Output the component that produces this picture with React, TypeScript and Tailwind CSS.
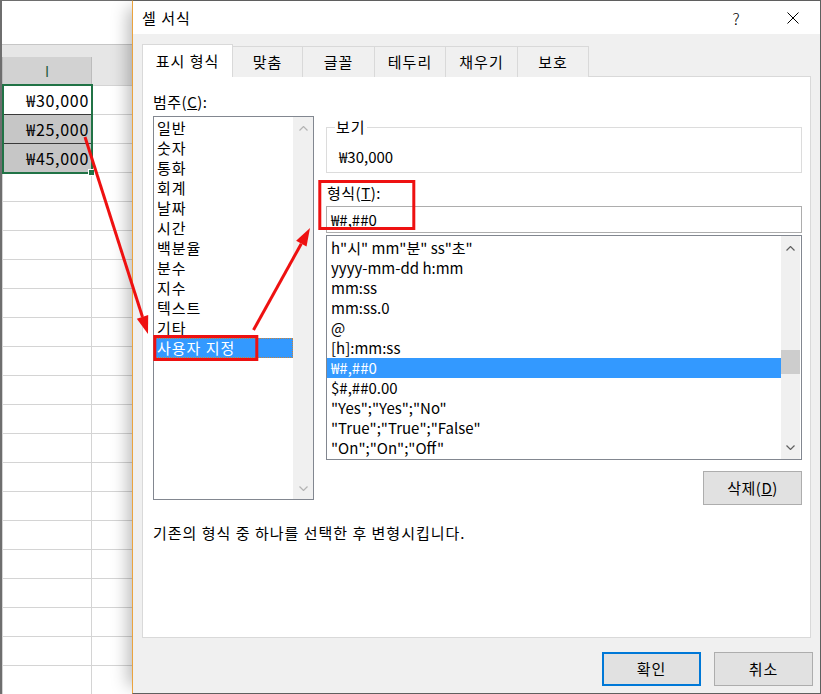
import React from 'react';

const categories = ['일반', '숫자', '통화', '회계', '날짜', '시간', '백분율', '분수', '지수', '텍스트', '기타', '사용자 지정'];

const formats = [
  'h"시" mm"분" ss"초"',
  'yyyy-mm-dd h:mm',
  'mm:ss',
  'mm:ss.0',
  '@',
  '[h]:mm:ss',
  '₩#,##0',
  '$#,##0.00',
  '"Yes";"Yes";"No"',
  '"True";"True";"False"',
  '"On";"On";"Off"',
];

const tabs = [
  { label: '맞춤', w: 'w-[70px]' },
  { label: '글꼴', w: 'w-[72px]' },
  { label: '테두리', w: 'w-[71px]' },
  { label: '채우기', w: 'w-[72px]' },
  { label: '보호', w: 'w-[71px]' },
];

function Chevron({ up, color }: { up?: boolean; color: string }) {
  return (
    <svg width="9" height="5" viewBox="0 0 9 5" className="block">
      <polyline
        points={up ? '0.5,4.5 4.5,0.5 8.5,4.5' : '0.5,0.5 4.5,4.5 8.5,0.5'}
        fill="none"
        stroke={color}
        strokeWidth="1.2"
      />
    </svg>
  );
}

function Sheet() {
  const values = ['₩30,000', '₩25,000', '₩45,000'];
  return (
    <div className="relative w-[132px] h-full border-l-2 border-[#6e6e6e] bg-white">
      <div className="h-[45px] bg-white border-t border-b border-t-[#6e6e6e] border-b-[#c6c6c6]" />
      <div className="h-[12px] bg-[#e6e6e6]" />
      <div className="flex h-[29px] bg-[#e6e6e6] border-b border-[#d4d4d4]">
        <div className="w-[90px] flex items-center justify-center border-l border-r border-[#bcbcbc] bg-[#d2d2d2] text-[14px] text-[#1f5c3c]">
          I
        </div>
      </div>
      {values.map((v, i) => (
        <div key={v} className="flex h-[29px]">
          <div
            className={`w-[90px] flex items-center justify-end pr-[2px] border-l border-r border-b border-[#d4d4d4] text-[16px] tracking-[0.7px] leading-[20px] ${
              i > 0 ? 'bg-[#c6c6c6]' : 'bg-white'
            } ${i < 2 ? 'border-b-[#3a3a3a]' : ''}`}
          >
            {v}
          </div>
          <div className="flex-1 border-b border-[#d4d4d4]" />
        </div>
      ))}
      {Array.from({ length: 18 }).map((_, i) => (
        <div key={i} className="flex h-[29px]">
          <div className="w-[90px] border-l border-r border-b border-[#d4d4d4]" />
          <div className="flex-1 border-b border-[#d4d4d4]" />
        </div>
      ))}
      <div className="absolute left-0 top-[84px] w-[91px] h-[90px] border-2 border-[#217346]" />
      <div className="absolute left-[86px] top-[169px] w-[7px] h-[7px] bg-[#217346] border border-white" />
    </div>
  );
}

function CategoryList() {
  return (
    <div className="mt-[4px] w-[161px] h-[384px] flex border border-[#828790] bg-white">
      <div className="flex-1 pt-[1px] tracking-[1px]">
        {categories.map((c) => (
          <div
            key={c}
            className={`h-[20px] leading-[20px] pl-[3px] ${
              c === '사용자 지정' ? 'bg-[#3399ff] text-white outline outline-1 outline-dotted outline-[#c8843c] -outline-offset-1' : ''
            }`}
          >
            {c}
          </div>
        ))}
      </div>
      <div className="w-[20px] flex flex-col bg-[#f0f0f0]">
        <div className="h-[22px] flex items-center justify-center">
          <Chevron up color="#b4b4b4" />
        </div>
        <div className="flex-1" />
        <div className="h-[22px] flex items-center justify-center">
          <Chevron color="#b4b4b4" />
        </div>
      </div>
    </div>
  );
}

function FormatList() {
  return (
    <div className="mt-[2px] h-[225px] flex border border-[#828790] bg-white">
      <div className="flex-1 pt-[2px]">
        {formats.map((f) => (
          <div
            key={f}
            className={`h-[20px] leading-[20px] pl-[4px] whitespace-pre ${f === '₩#,##0' ? 'bg-[#3399ff] text-white' : ''}`}
          >
            {f}
          </div>
        ))}
      </div>
      <div className="w-[19px] mr-px flex flex-col bg-[#f0f0f0]">
        <div className="h-[24px] flex items-center justify-center">
          <Chevron up color="#606060" />
        </div>
        <div className="mt-[90px] h-[24px] bg-[#cdcdcd]" />
        <div className="flex-1" />
        <div className="h-[23px] flex items-center justify-center">
          <Chevron color="#606060" />
        </div>
      </div>
    </div>
  );
}

function Dialog() {
  return (
    <div className="absolute left-[132px] top-0 w-[689px] h-[694px] flex flex-col bg-[#f0f0f0] border border-[#5f5f5f] border-l-[#eaa33e] shadow-[-12px_0_16px_-8px_rgba(0,0,0,0.28)] text-[15px] leading-[20px]">
      <div className="h-[33px] flex items-center pl-[9px] bg-white">
        <span className="tracking-[1px]">셀 서식</span>
        <div className="flex-1" />
        <span className="w-[46px] text-center text-[16px] font-light">?</span>
        <span className="ml-[11px] w-[46px] flex justify-center">
          <svg width="12" height="12" viewBox="0 0 12 12">
            <path d="M0.5 0.5 L11.5 11.5 M11.5 0.5 L0.5 11.5" stroke="#000" strokeWidth="1" />
          </svg>
        </span>
        <span className="w-[4px]" />
      </div>

      <div className="px-[9px] pt-[10px]">
        <div className="flex items-end h-[33px] tracking-[1px]">
          <div className="relative z-10 w-[91px] h-[33px] flex items-center justify-center bg-white border border-b-0 border-[#d9d9d9]">
            표시 형식
          </div>
          {tabs.map((t) => (
            <div
              key={t.label}
              className={`${t.w} h-[31px] flex items-center justify-center bg-[#f0f0f0] border border-l-0 border-b-0 border-[#d9d9d9]`}
            >
              {t.label}
            </div>
          ))}
        </div>

        <div className="-mt-px h-[562px] bg-white border border-[#d9d9d9] pt-[15px] pl-[10px] pr-[8px]">
          <div className="flex">
            <div className="w-[161px]">
              <div className="tracking-[0.5px]">
                범주(<span className="underline">C</span>):
              </div>
              <CategoryList />
            </div>

            <div className="ml-[12px] w-[476px] pt-[25px] flex flex-col">
              <fieldset className="border border-[#dcdcdc] pl-[8px] pt-[10px] pb-[5px]">
                <legend className="px-[1px] tracking-[1px]">보기</legend>
                <div className="pl-[4px]">₩30,000</div>
              </fieldset>
              <div className="mt-[10px] pl-[1px] tracking-[0.5px]">
                형식(<span className="underline">T</span>):
              </div>
              <div className="mt-[3px] h-[27px] flex items-center pl-[4px] border border-[#adadad] bg-white">₩#,##0</div>
              <FormatList />
              <button className="mt-[11px] self-end w-[99px] h-[34px] bg-[#e1e1e1] border border-[#adadad] tracking-[0.5px]">
                삭제(<span className="underline">D</span>)
              </button>
            </div>
          </div>
          <p className="mt-[18px] tracking-[1px]">기존의 형식 중 하나를 선택한 후 변형시킵니다.</p>
        </div>

        <div className="mt-[14px] -mr-[2px] flex justify-end gap-[13px] tracking-[1px]">
          <button className="w-[99px] h-[34px] bg-[#e1e1e1] border-2 border-[#0078d7]">확인</button>
          <button className="w-[99px] h-[34px] bg-[#e1e1e1] border border-[#adadad]">취소</button>
        </div>
      </div>
    </div>
  );
}

function Annotations() {
  return (
    <svg className="absolute left-0 top-0 pointer-events-none" width="821" height="694" viewBox="0 0 821 694">
      <rect x="154.8" y="336.5" width="102" height="23" fill="none" stroke="#ee1111" strokeWidth="3" />
      <rect x="319.8" y="181.5" width="94" height="47" fill="none" stroke="#ee1111" strokeWidth="3" />
      <line x1="85" y1="137" x2="142.5" y2="317" stroke="#ee1111" strokeWidth="3" />
      <polygon points="148,334 136.8,318.7 148.2,315.1" fill="#ee1111" />
      <line x1="253.5" y1="330" x2="301.3" y2="243.7" stroke="#ee1111" strokeWidth="3" />
      <polygon points="310,228 306.5,246.6 296.1,240.8" fill="#ee1111" />
    </svg>
  );
}

export default function App() {
  return (
    <div className="relative w-[821px] h-[694px] overflow-hidden bg-white text-black font-['Noto_Sans_CJK_KR',sans-serif]">
      <Sheet />
      <Dialog />
      <Annotations />
    </div>
  );
}
